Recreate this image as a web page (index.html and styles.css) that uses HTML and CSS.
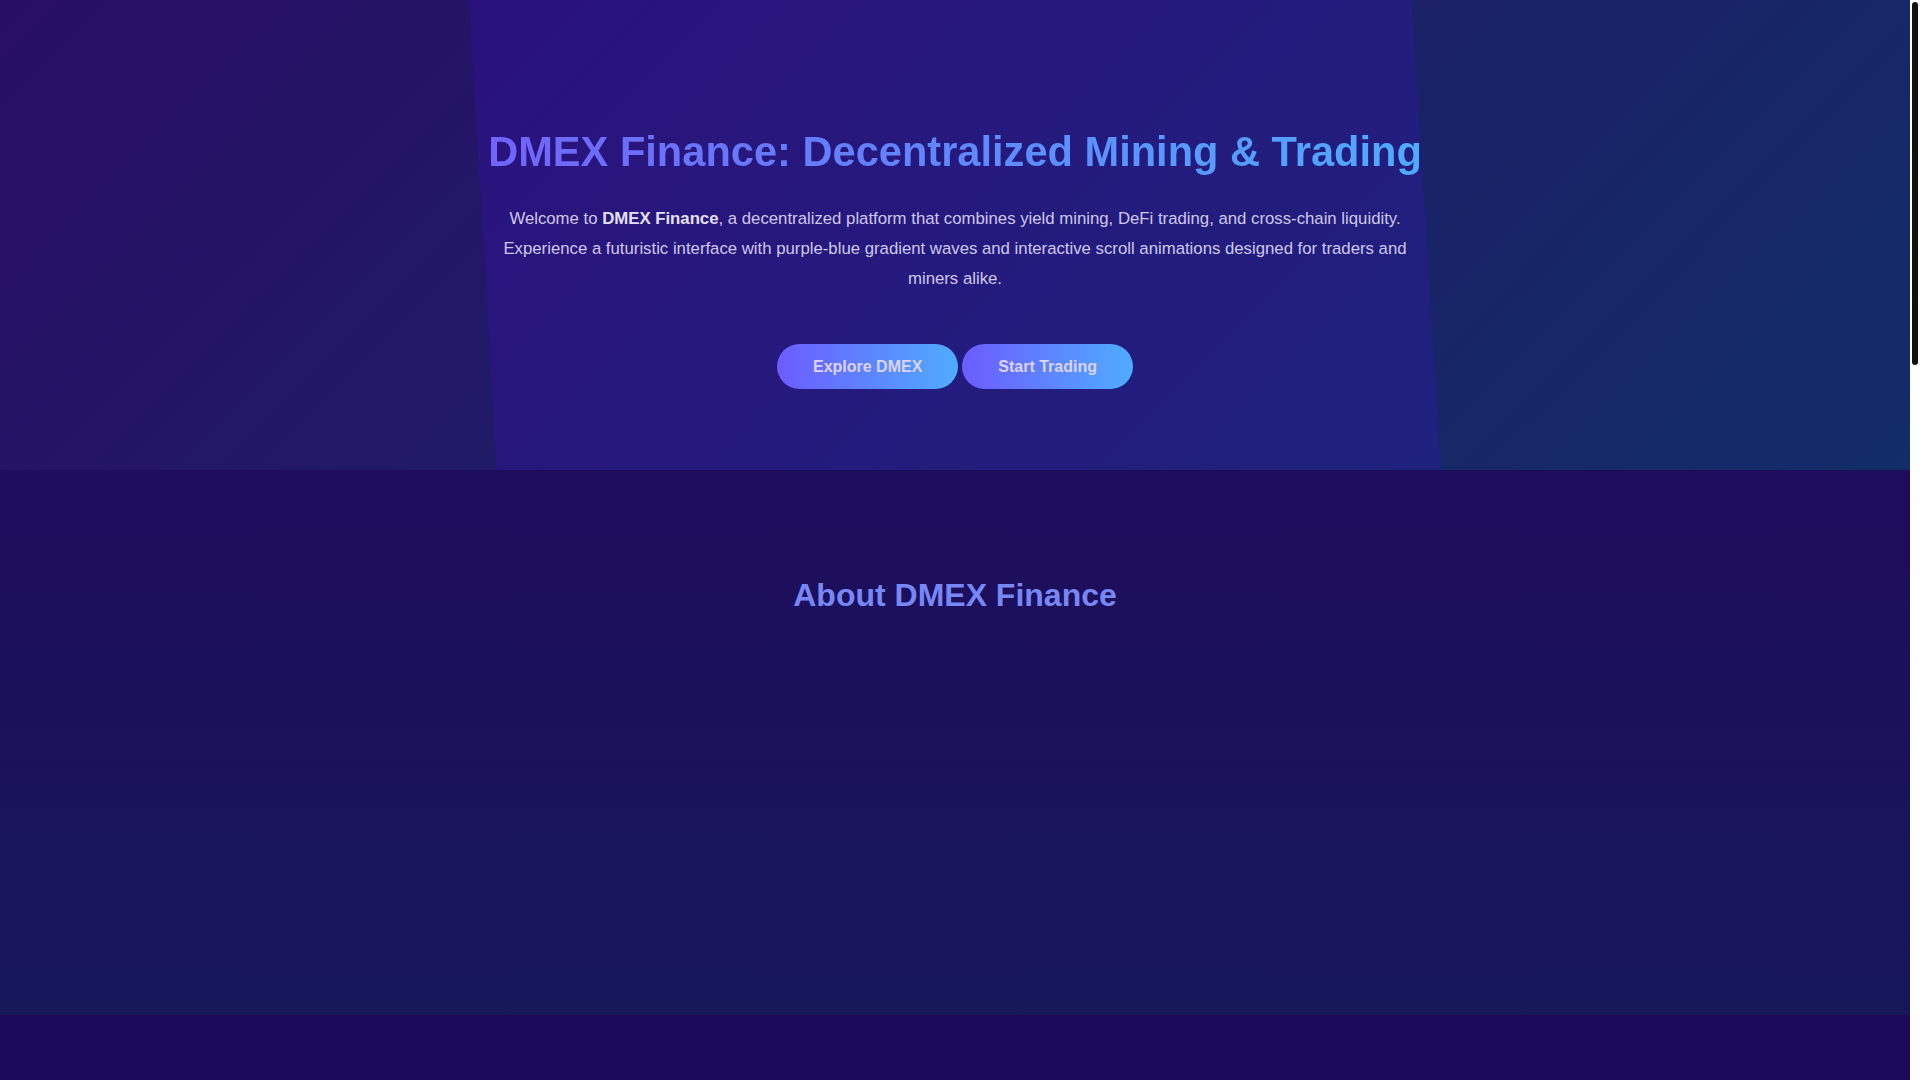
FILE: index.html
```html
<!DOCTYPE html>
<html lang="en">
<head>
    <meta charset="UTF-8">
    <meta name="viewport" content="width=device-width, initial-scale=1.0">
    <title>DMEX Finance</title>
    <link rel="stylesheet" href="styles.css">
</head>
<body>
    <div class="scroll-rail"><div class="scroll-thumb"></div></div>

    <header class="hero">
        <div class="hero-inner">
            <h1>DMEX Finance: Decentralized Mining &amp; Trading</h1>
            <p>Welcome to <strong>DMEX Finance</strong>, a decentralized platform that combines yield mining, DeFi trading, and cross-chain liquidity. Experience a futuristic interface with purple-blue gradient waves and interactive scroll animations designed for traders and miners alike.</p>
            <div class="hero-actions">
                <a href="#about" class="btn">Explore DMEX</a>
                <a href="#trade" class="btn">Start Trading</a>
            </div>
        </div>
    </header>

    <section id="about" class="about">
        <h2>About DMEX Finance</h2>
    </section>

    <section id="features" class="block">
        <h2>Features</h2>
        <p>Yield mining pools, spot and perpetual trading, and cross-chain bridges in one place.</p>
    </section>

    <section id="trade" class="block">
        <h2>Start Trading</h2>
        <p>Connect your wallet and trade directly from your own keys.</p>
    </section>

    <section id="roadmap" class="block">
        <h2>Roadmap</h2>
        <p>Mainnet launch, governance token, and multi-chain liquidity mining.</p>
    </section>

    <footer class="footer">
        <p>&copy; 2024 DMEX Finance. All rights reserved.</p>
    </footer>
</body>
</html>
```

FILE: styles.css
```css
html {
    background: #fff;
}
body {
    margin: 0 10px 0 0; /* room for the scroll rail on the right */
    font-family: "Liberation Sans", Arial, sans-serif;
    background-color: #1c0a5a; /* deep violet page background */
    color: #d6d0f5;
}

/* thin dark scroll indicator on a white rail */
.scroll-rail {
    position: fixed;
    top: 0;
    right: 0;
    bottom: 0;
    width: 10px;
    background: #fff;
    z-index: 10;
}
.scroll-thumb {
    height: 363px;
    margin: 2px 2px 0;
    border-radius: 3px;
    background: #111;
}

/* hero */
.hero {
    position: relative;
    height: 470px;
    box-sizing: border-box;
    padding: 128px 20px 0;
    text-align: center;
    background: linear-gradient(135deg, #290e66, #122d68);
    overflow: hidden;
}
/* the lighter slanted band behind the text */
.hero::before {
    content: "";
    position: absolute;
    inset: 0;
    background: rgba(80, 10, 255, 0.15);
    clip-path: polygon(24.55% 0, 73.9% 0, 75.45% 100%, 26% 100%);
}
.hero-inner {
    position: relative;
    max-width: 960px;
    margin: 0 auto;
}
.hero h1 {
    margin: 0 0 28px;
    font-size: 41.6px;
    background: linear-gradient(90deg, #7163fb, #4facfe);
    -webkit-background-clip: text;
    background-clip: text;
    color: transparent;
}
.hero p {
    max-width: 940px;
    margin: 0 auto;
    font-size: 16.75px;
    line-height: 30px;
    color: #cfc8f0;
}
.hero p strong {
    color: #e6e0ff;
}
.hero-actions {
    display: flex;
    justify-content: center;
    gap: 4px;
    margin-top: 50px;
}
.btn {
    display: block;
    padding: 14px 36px;
    border-radius: 50px;
    font-size: 16px;
    font-weight: bold;
    line-height: 17px;
    color: #dcd4ff;
    text-decoration: none;
    background: linear-gradient(90deg, #6c5cff, #4facfe);
}
.btn:hover {
    background: linear-gradient(90deg, #4facfe, #6c5cff);
}

/* about */
.about {
    min-height: 545px;
    box-sizing: border-box;
    padding: 81px 20px 80px;
    text-align: center;
    background: linear-gradient(180deg, #1e0c5c, #16185a);
}
.about h2 {
    margin: 26px 0 0;
    font-size: 32px;
    color: #7787f6;
}

/* lower sections */
.block {
    min-height: 600px;
    box-sizing: border-box;
    padding: 80px 20px;
    text-align: center;
}
.block h2 {
    margin: 26px 0 20px;
    font-size: 32px;
    color: #7787f6;
}
.block p {
    margin: 0;
    font-size: 16.8px;
    line-height: 30px;
}
.footer {
    min-height: 365px;
    box-sizing: border-box;
    padding: 40px 20px;
    text-align: center;
    font-size: 14px;
    color: #8f88c0;
}
```
